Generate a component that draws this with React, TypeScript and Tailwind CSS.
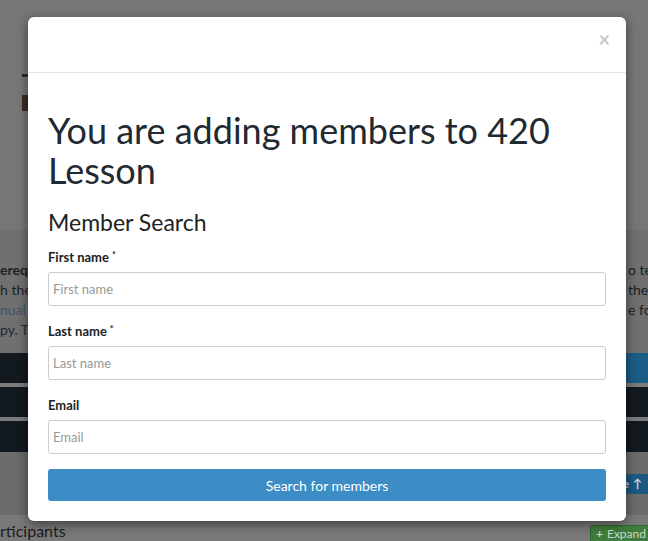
import React from 'react'

const font = { fontFamily: 'Lato, "Open Sans", sans-serif' }

function Field({ label, required }: { label: string; required?: boolean }) {
  return (
    <div className="mb-4">
      <label className="mb-[6px] block h-[18px] text-[13px] font-bold leading-[18px] text-[#222]">
        {label}
        {required && <span className="relative -top-[4px] ml-[3px] text-[9px]">*</span>}
      </label>
      <input
        placeholder={label}
        className="block h-[34px] w-full rounded-[3px] border border-[#ccc] px-[4px] text-[13px] text-[#333] placeholder:text-[#999] focus:outline-none"
      />
    </div>
  )
}

export default function App() {
  return (
    <div className="relative h-[541px] w-[648px] overflow-hidden bg-[#767676]" style={font}>
      {/* page behind the overlay */}
      <div className="flex flex-col">
        <div className="h-[230px] bg-[#777777] pl-[22px] pt-[74px]">
          <div className="h-[3px] w-[6px] bg-[#2a2a2a]" />
          <div className="mt-[18px] h-[16px] w-[6px] bg-[#3a2a24]" />
        </div>

        <div className="flex h-[123px] bg-[#707070] pt-[30px] text-[14px] leading-[20px] text-[#1c1f22]">
          <div className="w-[28px] whitespace-nowrap">
            <div className="font-bold">erequ</div>
            <div>h the</div>
            <div className="text-[#3f5566]">nual</div>
            <div className="text-[#1d2a3c]">py. Th</div>
          </div>
          <div className="flex-1" />
          <div className="w-[20px] whitespace-nowrap">
            <div>o tes</div>
            <div>the</div>
            <div>e for</div>
          </div>
        </div>

        <div className="flex h-[30px] bg-[#121a20]">
          <div className="flex-1" />
          <div className="w-[24px] bg-[#1b5d86]" />
        </div>
        <div className="h-[4px] bg-[#7c7c7c]" />
        <div className="h-[30px] bg-[#121a20]" />
        <div className="h-[4px] bg-[#7c7c7c]" />
        <div className="h-[31px] bg-[#121a20]" />

        <div className="flex h-[63px] bg-[#6b6b6b] pt-[22px]">
          <div className="flex-1" />
          <div className="flex h-[20px] w-[26px] items-center justify-end gap-[4px] bg-[#1d5a80] pr-[6px] text-[12px] font-bold text-[#c9d6de]">
            <span>e</span>
            <span>↑</span>
          </div>
        </div>

        <div className="flex h-[27px] items-end justify-between bg-[#797979]">
          <div className="pb-[1px] text-[16px] leading-[20px] text-[#1b1b1b]">rticipants</div>
          <div className="flex h-[17px] w-[58px] items-center gap-[4px] rounded-tl-[3px] border border-b-0 border-r-0 border-[#2f6a2f] bg-[#3f7d3d] pl-[5px] text-[12px] text-[#c9d9c8]">
            <span className="font-bold">+</span>
            <span>Expand</span>
          </div>
        </div>
      </div>

      {/* modal */}
      <div className="absolute left-[28px] top-[17px] h-[504px] w-[598px] rounded-[6px] bg-white shadow-[0_3px_12px_rgba(0,0,0,0.5)]">
        <div className="flex h-[56px] items-start justify-end border-b border-[#e5e5e5] pr-[16px] pt-[10px]">
          <span className="text-[20px] font-bold leading-[24px] text-[#c8c8c8]">×</span>
        </div>

        <div className="px-5 pt-[37px]">
          <h1 className="text-[36px] leading-[40px] text-[#1f2a32]">You are adding members to 420 Lesson</h1>
          <h3 className="mt-[19px] mb-[13px] text-[23px] leading-[26px] text-[#222]">Member Search</h3>

          <Field label="First name" required />
          <Field label="Last name" required />
          <Field label="Email" />

          <button className="-mt-px h-[32px] w-full rounded-[3px] bg-[#3c8cc6] text-[14px] text-white">
            Search for members
          </button>
        </div>
      </div>
    </div>
  )
}
